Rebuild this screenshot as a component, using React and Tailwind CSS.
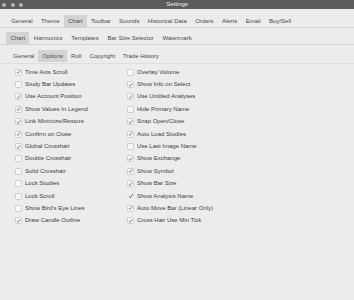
import React from 'react'

const mainTabs = ['General', 'Theme', 'Chart', 'Toolbar', 'Sounds', 'Historical Data', 'Orders', 'Alerts', 'Email', 'Buy/Sell']
const chartTabs = ['Chart', 'Harmonics', 'Templates', 'Bar Size Selector', 'Watermark']
const subTabs = ['General', 'Options', 'Roll', 'Copyright', 'Trade History']

const leftOptions = [
  ['Time Axis Scroll', true],
  ['Study Bar Updates', false],
  ['Use Account Position', true],
  ['Show Values In Legend', true],
  ['Link Minimize/Restore', true],
  ['Confirm on Close', true],
  ['Global Crosshair', true],
  ['Double Crosshair', false],
  ['Solid Crosshair', false],
  ['Lock Studies', false],
  ['Lock Scroll', false],
  ["Show Bird's Eye Lines", false],
  ['Draw Candle Outline', true],
]

const rightOptions = [
  ['Overlay Volume', false],
  ['Show Info on Select', true],
  ['Use Untitled Analyses', true],
  ['Hide Primary Name', false],
  ['Snap Open/Close', true],
  ['Auto Load Studies', true],
  ['Use Last Image Name', false],
  ['Show Exchange', true],
  ['Show Symbol', true],
  ['Show Bar Size', true],
  ['Show Analysis Name', true, true],
  ['Auto Move Bar (Linear Only)', true],
  ['Cross Hair Use Min Tick', true],
]

// Fila de abas
const TabRow = ({ tabs, active, className, pad = 'px-[4px]' }) => (
  <div className={`flex items-end ${className}`}>
    {tabs.map(t => (
      <div
        key={t}
        className={`${pad} h-[12px] flex items-center whitespace-nowrap ${t === active ? 'bg-[#d3d3d3]' : ''}`}
      >
        {t}
      </div>
    ))}
  </div>
)

const Check = ({ label, checked, bare }) => (
  <div className="flex items-center h-[12.4px] whitespace-nowrap">
    <div
      className={`w-[7px] h-[7px] rounded-[1.5px] flex items-center justify-center ${bare ? '' : 'bg-[#f6f6f6] border border-[#cdcdcd]'}`}
    >
      {checked && (
        <svg viewBox="0 0 10 10" className="w-[6px] h-[6px]">
          <path d="M1.8 5.4 L4 7.8 L8.4 1.6" fill="none" stroke="#4a4a4a" strokeWidth="1.3" />
        </svg>
      )}
    </div>
    <span className="ml-[3px]">{label}</span>
  </div>
)

export default function App() {
  return (
    <div
      className="w-[354px] h-[300px] bg-[#ececec] text-[6px] text-[#3c3c3c] overflow-hidden"
      style={{ fontFamily: '"Liberation Sans", Arial, sans-serif' }}
    >
      {/* Barra de título */}
      <div className="relative h-[9px] bg-[#5b5b5b] flex items-center justify-center">
        <div className="absolute left-[2px] top-[2.5px] flex gap-[4.5px]">
          <div className="w-[4px] h-[4px] rounded-full bg-[#b4b4b4]" />
          <div className="w-[4px] h-[4px] rounded-full bg-[#b4b4b4]" />
          <div className="w-[4px] h-[4px] rounded-full bg-[#b4b4b4]" />
        </div>
        <span className="text-[#f2f2f2]">Settings</span>
      </div>

      <div className="pt-[6px] border-b border-[#d2d2d2]">
        <TabRow tabs={mainTabs} active="Chart" className="pl-[7px] text-[#4a4a4a]" pad="px-[4.2px]" />
      </div>

      <div className="pt-[4px] border-b border-[#d2d2d2]">
        <TabRow tabs={chartTabs} active="Chart" className="pl-[6px] text-[#4a4a4a]" pad="px-[4.4px]" />
      </div>

      <div className="pt-[5px] pb-[1px] border-b border-[#dedede]">
        <TabRow tabs={subTabs} active="Options" className="pl-[9px] text-[#4a4a4a]" pad="px-[4px]" />
      </div>

      {/* Opções */}
      <div className="flex pt-[2px] pl-[15px]">
        <div className="w-[112px] flex flex-col">
          {leftOptions.map(([l, c]) => (
            <Check key={l} label={l} checked={c} />
          ))}
        </div>
        <div className="flex flex-col">
          {rightOptions.map(([l, c, b]) => (
            <Check key={l} label={l} checked={c} bare={b} />
          ))}
        </div>
      </div>
    </div>
  )
}
